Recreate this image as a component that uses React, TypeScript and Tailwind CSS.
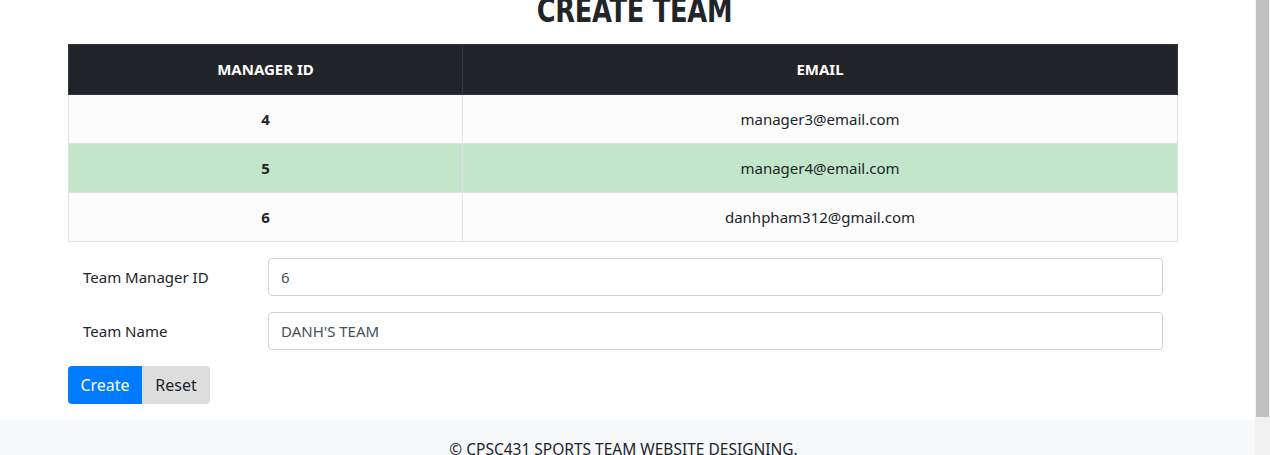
export default function App() {
  const rows = [
    { id: "4", email: "manager3@email.com", bg: "bg-[#fcfcfc]" },
    { id: "5", email: "manager4@email.com", bg: "bg-[#c3e6cb]" },
    { id: "6", email: "danhpham312@gmail.com", bg: "bg-[#fcfcfc]" },
  ];
  return (
    <div className="flex h-[455px] w-[1270px] overflow-hidden bg-white text-[#212529]" style={{ fontFamily: '"Noto Sans", "Open Sans", sans-serif' }}>
      <div className="flex w-[1255px] flex-col">
        <div className="flex flex-col pl-[68px] pr-[77px]">
          <div className="mt-[-14px] flex h-[58px] justify-center pl-[22px]">
            <h1
              className="scale-x-[0.84] text-[34px] font-bold leading-[48px] tracking-[-0.3px]"
              style={{ fontFamily: '"DejaVu Sans Condensed", "DejaVu Sans", sans-serif' }}
            >
              CREATE TEAM
            </h1>
          </div>
          <table className="w-[1110px] border-collapse text-[15px]">
            <thead>
              <tr className="h-[50px] bg-[#212529] text-white">
                <th className="w-[394px] border border-[#32383e] font-bold">MANAGER ID</th>
                <th className="border border-[#32383e] font-bold">EMAIL</th>
              </tr>
            </thead>
            <tbody>
              {rows.map((r) => (
                <tr key={r.id} className={`h-[49px] ${r.bg}`}>
                  <td className="border border-[#dee2e6] text-center font-bold">{r.id}</td>
                  <td className="border border-[#dee2e6] text-center">{r.email}</td>
                </tr>
              ))}
            </tbody>
          </table>
          <div className="mt-[16px] flex flex-col gap-[16px] text-[15px]">
            <div className="flex items-center">
              <label className="w-[200px] pl-[15px]">Team Manager ID</label>
              <div className="flex h-[38px] w-[895px] items-center rounded-[4px] border border-[#ced4da] px-[12px] text-[#495057]">6</div>
            </div>
            <div className="flex items-center">
              <label className="w-[200px] pl-[15px]">Team Name</label>
              <div className="flex h-[38px] w-[895px] items-center rounded-[4px] border border-[#ced4da] px-[12px] text-[#495057]">DANH'S TEAM</div>
            </div>
          </div>
          <div className="mt-[16px] flex">
            <button className="h-[38px] w-[74px] rounded-l-[4px] bg-[#007bff] text-[16px] text-white">Create</button>
            <button className="h-[38px] w-[68px] rounded-r-[4px] bg-[#dddddd] text-[16px] text-[#212529]">Reset</button>
          </div>
        </div>
        <footer className="mt-[16px] flex flex-1 justify-center bg-[#f7f8f9] pr-[8px] pt-[18px] text-[15.5px]">
          © CPSC431 SPORTS TEAM WEBSITE DESIGNING.
        </footer>
      </div>
      <div className="flex w-[15px] flex-col bg-[#f1f1f1] px-[1px]">
        <div className="h-[417px] w-full bg-[#c1c1c1]" />
      </div>
    </div>
  );
}
